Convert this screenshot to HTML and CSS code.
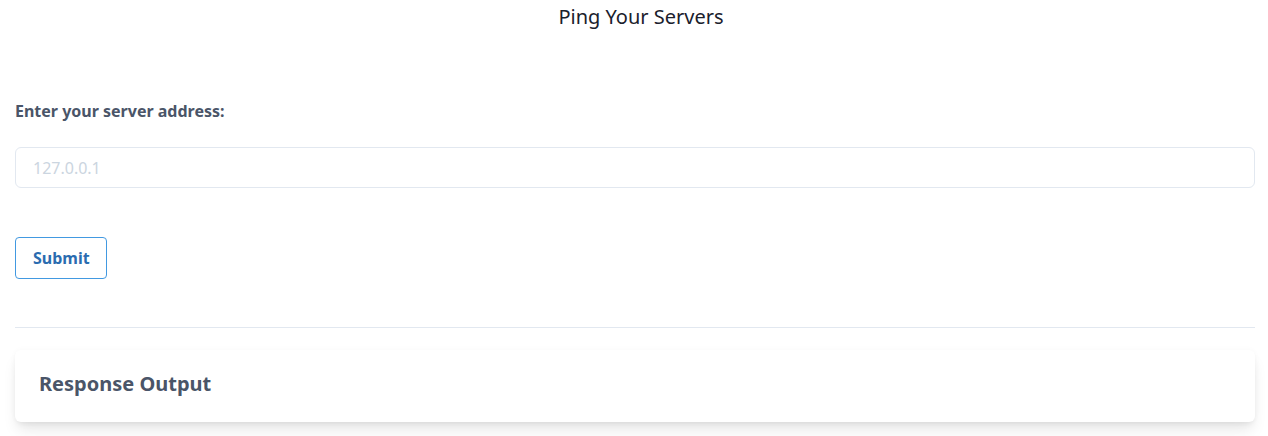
FILE: index.html
```html
<!DOCTYPE html>
<html>
<head>
<meta charset="utf-8">
<link rel="stylesheet" href="styles.css">
</head>
<body>
<div class="page">
  <h1 class="title">Ping Your Servers</h1>
  <form class="form">
    <label class="label" for="addr">Enter your server address:</label>
    <input class="input" id="addr" type="text" placeholder="127.0.0.1">
    <div class="actions">
      <button class="btn" type="button">Submit</button>
    </div>
  </form>
  <hr class="divider">
  <section class="card">
    <h2 class="card-title">Response Output</h2>
  </section>
</div>
</body>
</html>
```
FILE: styles.css
```css
* { box-sizing: border-box; }
html, body { margin: 0; padding: 0; background: #fff; }
body { font-family: "Noto Sans", "Open Sans", sans-serif; color: #4a5568; }
.page { padding: 3px 13px 14px 15px; }
.title {
  margin: 0;
  padding-left: 12px;
  font-size: 20px;
  line-height: 28px;
  font-weight: 400;
  color: #1a202c;
  text-align: center;
}
.form { display: flex; flex-direction: column; padding-top: 68px; }
.label {
  font-size: 16px;
  font-weight: 700;
  line-height: 24px;
  color: #4a5568;
}
.input {
  margin-top: 24px;
  height: 41px;
  width: 100%;
  border: 1px solid #e2e8f0;
  border-radius: 6px;
  padding: 0 17px;
  font-family: inherit;
  font-size: 16px;
  color: #4a5568;
  outline: none;
}
.input::placeholder { color: #cbd5e0; }
.actions { margin-top: 49px; }
.btn {
  height: 42px;
  padding: 0 16px 0 17px;
  background: #fff;
  border: 1px solid #4299e1;
  border-radius: 4px;
  font-family: inherit;
  font-size: 16px;
  font-weight: 700;
  color: #2b6cb0;
}
.divider {
  margin: 48px 0 0;
  border: 0;
  border-top: 1px solid #e2e8f0;
}
.card {
  margin-top: 22px;
  height: 72px;
  padding: 0 24px 5px;
  display: flex;
  align-items: center;
  background: #fff;
  border-radius: 6px;
  box-shadow: 0 10px 15px -3px rgba(0,0,0,0.1), 0 4px 6px -2px rgba(0,0,0,0.05), 0 0 6px rgba(0,0,0,0.03);
}
.card-title {
  margin: 0;
  font-size: 20px;
  font-weight: 700;
  color: #4a5568;
}
```
